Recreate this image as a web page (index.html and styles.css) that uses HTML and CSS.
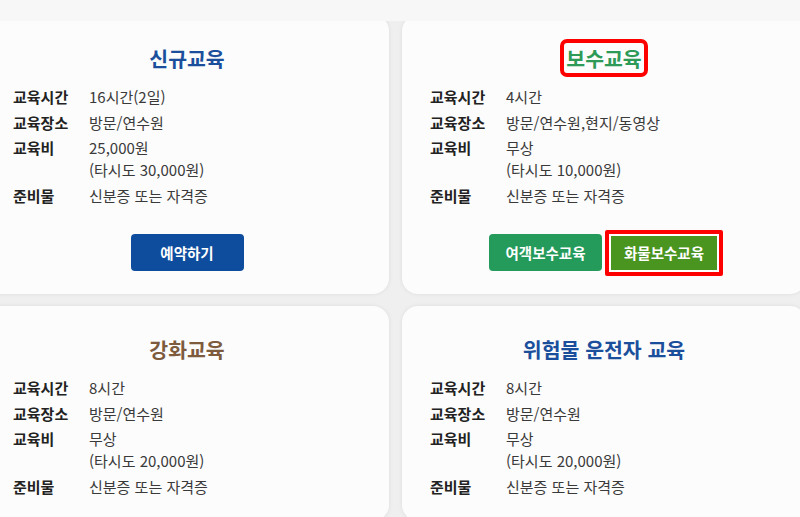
FILE: index.html
```html
<!DOCTYPE html>
<html lang="ko">
<head>
<meta charset="utf-8">
<title>교육 안내</title>
<link rel="stylesheet" href="styles.css">
</head>
<body>
<div class="topfade"></div>
<main class="grid">
  <section class="card">
    <h2 class="title title-blue">신규교육</h2>
    <dl class="info">
      <div class="row"><dt>교육시간</dt><dd>16시간(2일)</dd></div>
      <div class="row"><dt>교육장소</dt><dd>방문/연수원</dd></div>
      <div class="row"><dt>교육비</dt><dd>25,000원<br>(타시도 30,000원)</dd></div>
      <div class="row"><dt>준비물</dt><dd>신분증 또는 자격증</dd></div>
    </dl>
    <div class="actions">
      <a class="btn btn-blue">예약하기</a>
    </div>
  </section>
  <section class="card">
    <h2 class="title title-green"><span class="mark">보수교육</span></h2>
    <dl class="info">
      <div class="row"><dt>교육시간</dt><dd>4시간</dd></div>
      <div class="row"><dt>교육장소</dt><dd>방문/연수원,현지/동영상</dd></div>
      <div class="row"><dt>교육비</dt><dd>무상<br>(타시도 10,000원)</dd></div>
      <div class="row"><dt>준비물</dt><dd>신분증 또는 자격증</dd></div>
    </dl>
    <div class="actions actions-pair">
      <a class="btn btn-green">여객보수교육</a>
      <span class="btn-mark"><a class="btn btn-olive">화물보수교육</a></span>
    </div>
  </section>
  <section class="card">
    <h2 class="title title-brown">강화교육</h2>
    <dl class="info">
      <div class="row"><dt>교육시간</dt><dd>8시간</dd></div>
      <div class="row"><dt>교육장소</dt><dd>방문/연수원</dd></div>
      <div class="row"><dt>교육비</dt><dd>무상<br>(타시도 20,000원)</dd></div>
      <div class="row"><dt>준비물</dt><dd>신분증 또는 자격증</dd></div>
    </dl>
  </section>
  <section class="card">
    <h2 class="title title-blue">위험물 운전자 교육</h2>
    <dl class="info">
      <div class="row"><dt>교육시간</dt><dd>8시간</dd></div>
      <div class="row"><dt>교육장소</dt><dd>방문/연수원</dd></div>
      <div class="row"><dt>교육비</dt><dd>무상<br>(타시도 20,000원)</dd></div>
      <div class="row"><dt>준비물</dt><dd>신분증 또는 자격증</dd></div>
    </dl>
  </section>
</main>
</body>
</html>
```
FILE: styles.css
```css
* { box-sizing: border-box; }
html, body { margin: 0; padding: 0; }
body {
  background: #efefef;
  font-family: "Noto Sans CJK KR", "Noto Sans", sans-serif;
  color: #333;
  overflow: hidden;
}
.topfade {
  position: fixed;
  top: 0; left: 0; right: 0;
  height: 21px;
  background: #f7f7f7;
  z-index: 2;
}
.grid {
  display: grid;
  grid-template-columns: 404px 404px;
  column-gap: 13px;
  row-gap: 12px;
  margin-left: -15px;
  padding-top: 15px;
}
.card {
  background: #fcfcfc;
  border-radius: 16px;
  box-shadow: 0 0 4px rgba(0,0,0,0.08);
  padding: 29px 28px 23px 28px;
}
.title {
  margin: 0 0 14px;
  text-align: center;
  font-size: 20.5px;
  line-height: 28px;
  font-weight: 700;
}
.title-blue { color: #1b4f9c; }
.title-green { color: #2e9a57; }
.title-brown { color: #7d5b3c; }
.mark {
  display: inline-block;
  outline: 4px solid #f00;
  outline-offset: 1px;
  border-radius: 2px;
  padding: 0 1px;
  margin: 0 -1px;
}
.info { margin: 0; }
.row {
  display: flex;
  font-size: 15px;
  line-height: 22px;
  margin-bottom: 3.5px;
}
.row:last-child { margin-bottom: 0; }
dt {
  width: 76px;
  flex: none;
  font-weight: 700;
  color: #222;
}
dd { margin: 0; color: #3a3a3a; }
.actions {
  display: flex;
  justify-content: center;
  align-items: center;
  gap: 3px;
  margin-top: 27.5px;
  height: 37px;
}
.actions-pair { padding-left: 4px; }
.btn {
  display: inline-flex;
  align-items: center;
  justify-content: center;
  width: 113px;
  height: 37px;
  border-radius: 4px;
  color: #fff;
  font-size: 14.5px;
  font-weight: 700;
}
.btn-blue { background: #0e4c9e; }
.btn-green { background: #249a5b; }
.btn-olive { background: #4a9520; width: 106px; height: 34px; border-radius: 0; }
.btn-mark {
  display: inline-block;
  border: 4px solid #f00;
  border-radius: 2px;
  padding: 2px;
  background: #fff;
  margin: -5px 0;
}
```
